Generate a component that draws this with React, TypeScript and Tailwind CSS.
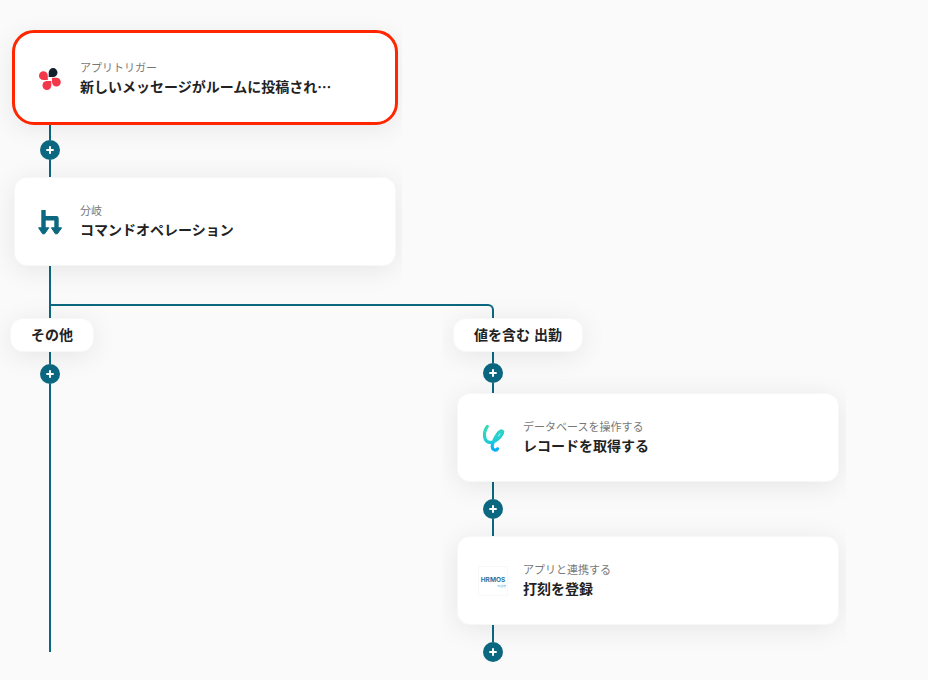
import type { ReactNode } from "react";

interface FlowNode {
  id: string;
  kind: string;
  title: string;
  icon: ReactNode;
  selected?: boolean;
}

function ChatIcon() {
  return (
    <svg width="30" height="30" viewBox="0 0 30 30" aria-hidden="true">
      <path fill="#12202e" d="M13.7 8.6a4.4 4.5 0 1 1 4.4 4.5h-4.4z" />
      <g fill="#f2384a">
        <path d="M8.4 16.1a4.4 4.4 0 1 1 4.4-4.4v4.4z" />
        <path d="M16.3 21.5a4.4 4.5 0 1 1-4.4-4.5h4.4z" />
        <path d="M17 13.7h4.4a4.4 4.4 0 1 1-4.4 4.4z" />
      </g>
    </svg>
  );
}

function BranchIcon() {
  return (
    <svg width="30" height="30" viewBox="0 0 30 30" aria-hidden="true">
      <path
        fill="none"
        stroke="#0b6880"
        strokeWidth="4.4"
        strokeLinejoin="round"
        d="M8.5 3v19M8.5 11.3h13v11"
      />
      <path
        fill="#0b6880"
        stroke="#0b6880"
        strokeLinejoin="round"
        d="M3.6 20.8h10.2L9.6 26.8h-2zM16.4 20.8h10.2L22.4 26.8h-2z"
      />
    </svg>
  );
}

function DatabaseIcon() {
  return (
    <svg width="30" height="30" viewBox="0 0 30 30" aria-hidden="true">
      <defs>
        <linearGradient id="db" x1="0" y1="0" x2="0.2" y2="1">
          <stop offset="0" stopColor="#36dbae" />
          <stop offset="0.65" stopColor="#22cdd6" />
          <stop offset="1" stopColor="#05b0fb" />
        </linearGradient>
      </defs>
      <path
        fill="none"
        stroke="url(#db)"
        strokeWidth="3.2"
        strokeLinecap="round"
        strokeLinejoin="round"
        d="M9.3 3.5C6 7.5 5.8 13 7.4 16.5C9.5 20.5 14 20 17.5 17.6C21 15.5 24.8 11.5 24.7 8.8C24.3 6.8 21 8.4 19 11.8C17 15 14.4 19.5 14.2 23.5C14.4 27.7 18.5 27.9 19.5 25.8"
      />
    </svg>
  );
}

function HrmosIcon() {
  return (
    <svg width="30" height="30" viewBox="0 0 30 30" role="img" aria-label="HRMOS">
      <rect x="0.5" y="0.5" width="29" height="29" fill="#fff" stroke="#f8f8f8" />
      <text x="15" y="16" textAnchor="middle" fontSize="6.5" fontWeight="700" fill="#1e75a6" fontFamily="Inter, sans-serif">
        HRMOS
      </text>
      <text x="28" y="20.5" textAnchor="end" fontSize="2.5" fill="#4a9cc4" fontFamily="Noto Sans CJK JP, sans-serif">
        by 勤怠
      </text>
    </svg>
  );
}

const mainNodes: FlowNode[] = [
  { id: "trigger", kind: "アプリトリガー", title: "新しいメッセージがルームに投稿され…", icon: <ChatIcon />, selected: true },
  { id: "branch", kind: "分岐", title: "コマンドオペレーション", icon: <BranchIcon /> },
];

const attendNodes: FlowNode[] = [
  { id: "record", kind: "データベースを操作する", title: "レコードを取得する", icon: <DatabaseIcon /> },
  { id: "stamp", kind: "アプリと連携する", title: "打刻を登録", icon: <HrmosIcon /> },
];

function AddButton() {
  return (
    <button
      type="button"
      aria-label="追加"
      className="flex size-5 shrink-0 items-center justify-center rounded-full bg-[#0b6880] text-white"
    >
      <svg width="8" height="8" viewBox="0 0 8 8" aria-hidden="true">
        <path d="M4 0.3v7.4M0.3 4h7.4" stroke="currentColor" strokeWidth="2" />
      </svg>
    </button>
  );
}

function Connector({ className }: { className: string }) {
  return (
    <div className={`ml-[29px] flex w-5 flex-col items-center ${className}`}>
      <div className="w-0.5 flex-1 bg-[#0b6880]" />
      <AddButton />
      <div className="w-0.5 flex-1 bg-[#0b6880]" />
    </div>
  );
}

function NodeCard({ node }: { node: FlowNode }) {
  return (
    <div className="relative ml-1 w-[380px] rounded-xl bg-white shadow-[0_0_0_1px_#f7f7f7,0_4px_28px_rgba(0,0,0,0.09)]">
      {node.selected && (
        <span className="absolute -inset-x-[3px] -top-[5px] -bottom-[3px] rounded-[22px] border-3 border-[#ff2600] bg-white" />
      )}
      <div className="relative flex h-[87px] items-center gap-[15px] px-5">
        {node.icon}
        <div className="min-w-0 flex-1 pb-1 font-['Noto_Sans_CJK_JP',sans-serif]">
          <p className="text-[11px] leading-[19px] text-[#777]">{node.kind}</p>
          <p className="truncate text-sm leading-[19px] font-bold text-[#222]">{node.title}</p>
        </div>
      </div>
    </div>
  );
}

function ConditionPill({ label }: { label: string }) {
  return (
    <div className="relative w-fit rounded-xl bg-white px-5 text-sm leading-8 font-bold text-[#222] shadow-[0_0_0_1px_#f7f7f7,0_4px_28px_rgba(0,0,0,0.09)]">
      {label}
    </div>
  );
}

export default function App() {
  return (
    <main
      lang="ja"
      className="min-h-screen overflow-x-clip bg-[#fafafa] pb-[18px] font-['Liberation_Sans','Noto_Sans_CJK_JP',sans-serif]"
    >
      <section className="w-[402px] overflow-x-clip pt-[35px] pl-[11px]">
        {mainNodes.map((node, i) => (
          <div key={node.id}>
            {i > 0 && <Connector className="h-14" />}
            <NodeCard node={node} />
          </div>
        ))}
      </section>

      {/* fork into the two branches */}
      <div className="flex pl-[49px]">
        <div className="h-[54px] w-0.5 shrink-0 bg-[#0b6880]" />
        <div className="mt-[39px] w-[443px] shrink-0 rounded-tr-md border-t-2 border-r-2 border-[#0b6880]" />
      </div>

      <div className="flex">
        <section className="flex w-[443px] shrink-0 flex-col pl-[11px]">
          <ConditionPill label="その他" />
          <div className="ml-[29px] flex w-5 flex-1 flex-col items-center">
            <div className="h-[13px] w-0.5 bg-[#0b6880]" />
            <AddButton />
            <div className="mb-2.5 w-0.5 flex-1 bg-[#0b6880]" />
          </div>
        </section>

        <section className="w-[403px] shrink-0 overflow-x-clip pl-[11px]">
          <ConditionPill label="値を含む 出勤" />
          {attendNodes.map((node, i) => (
            <div key={node.id}>
              <Connector className={i === 0 ? "h-[43px]" : "h-14"} />
              <NodeCard node={node} />
            </div>
          ))}
          <div className="ml-[29px] flex w-5 flex-col items-center">
            <div className="h-[18px] w-0.5 bg-[#0b6880]" />
            <AddButton />
          </div>
        </section>
      </div>
    </main>
  );
}
